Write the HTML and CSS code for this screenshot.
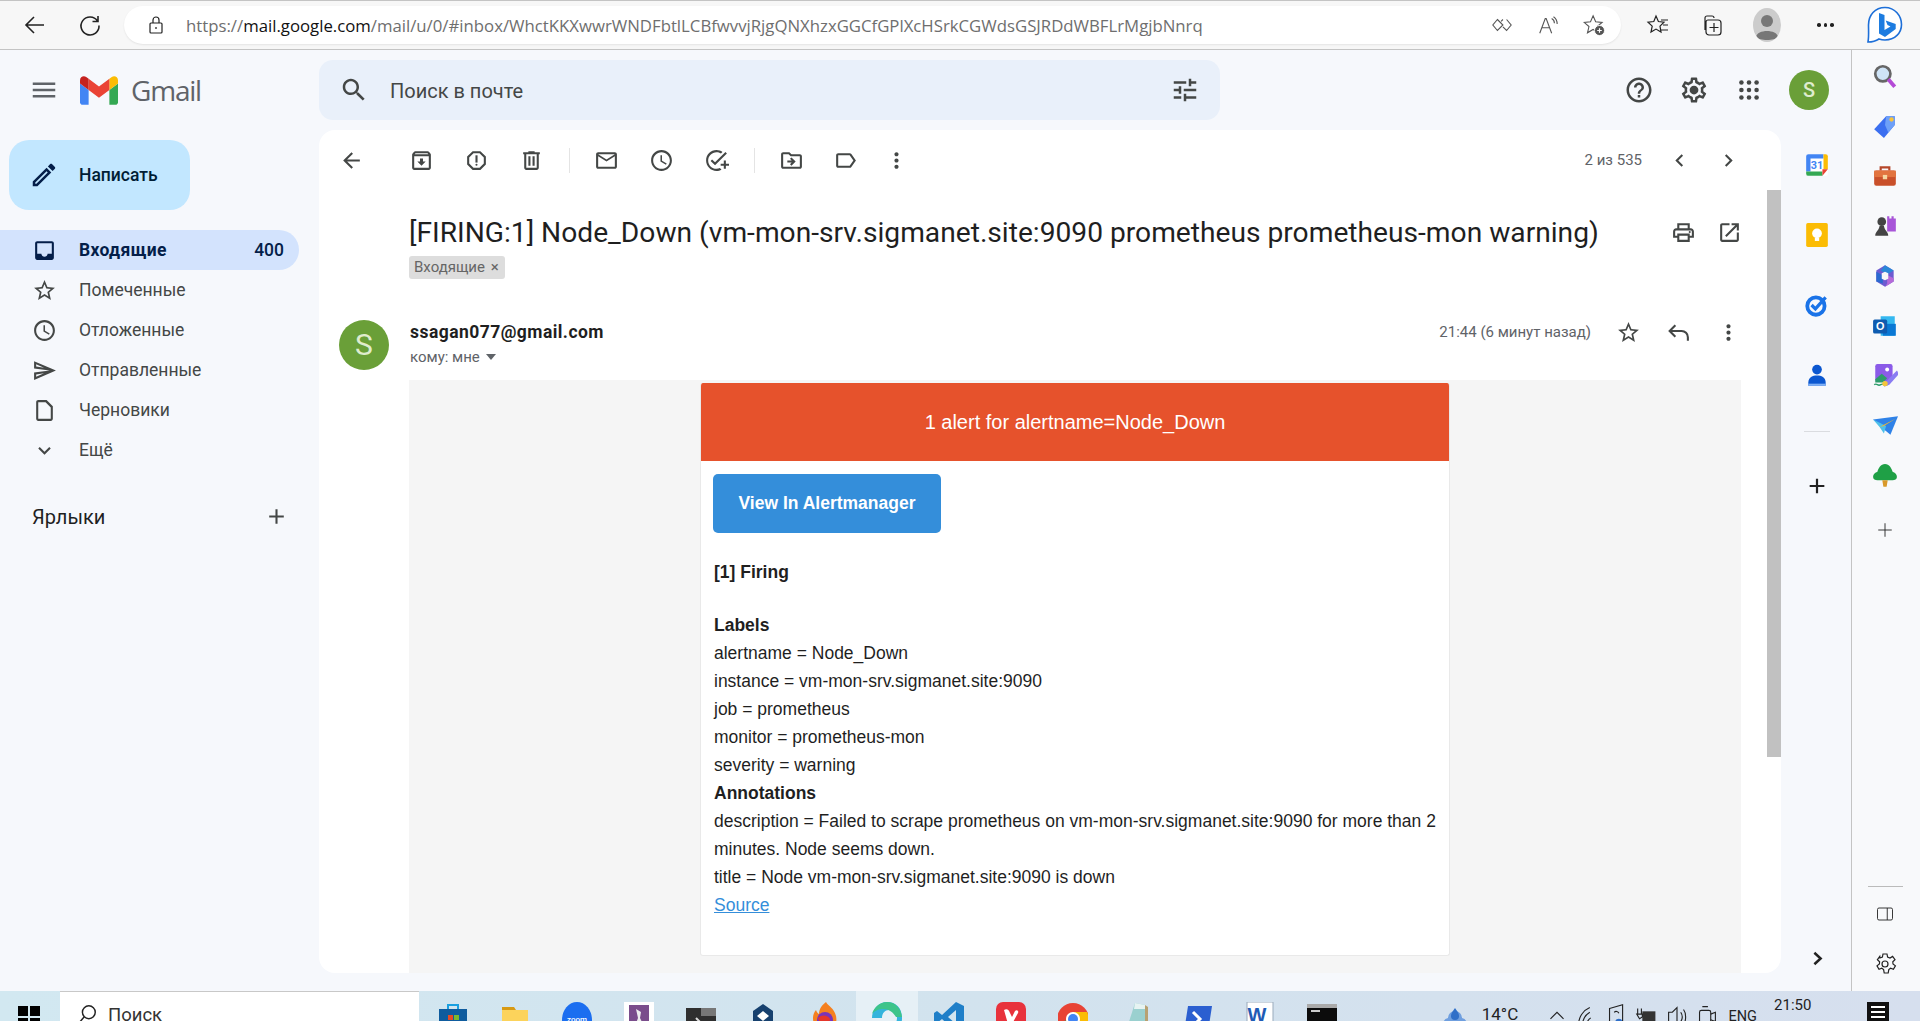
FILE: index.html
```html
<!DOCTYPE html>
<html lang="ru">
<head>
<meta charset="utf-8">
<title>Gmail</title>
<link rel="stylesheet" href="styles.css">
</head>
<body>
<div class="page">
  <header class="browser">
    <span class="bslot first"><svg class="ic-b" viewBox="0 0 24 24"><path d="M21 12H3M11 4l-8 8 8 8" class="ln"/></svg></span>
    <span class="bslot"><svg class="ic-b" viewBox="0 0 24 24"><path d="M19.500 8A9 9 0 1 0 21 12.500M20 3v5.500h-5.500" class="ln"/></svg></span>
    <div class="addr">
      <svg class="lock" viewBox="0 0 20 20"><path d="M5 8h10a1 1 0 0 1 1 1v8a1 1 0 0 1-1 1H5a1 1 0 0 1-1-1V9a1 1 0 0 1 1-1zM7 8V5a3 3 0 0 1 6 0v3" class="ln thin"/><circle cx="10" cy="13" r="1" fill="#444"/></svg>
      <span class="url">https://<b>mail.google.com</b>/mail/u/0/#inbox/WhctKKXwwrWNDFbtlLCBfwvvjRjgQNXhzxGGCfGPlXcHSrkCGWdsGSJRDdWBFLrMgjbNnrq</span>
      <span class="addr-end">
        <svg class="ic-a" viewBox="0 0 24 24"><path d="M7 6l6 6-6 6-5-6zM13 6l-2 2M17 6l5 6-5 6-4-4" class="ln gray thin"/></svg>
        <svg class="ic-a" viewBox="0 0 24 24"><path d="M3 21 9 5h1l6 16M5.500 15h8.500M16 5c2 1 3 3 3 5M18 3c3 2 4 5 4 8" class="ln gray thin"/></svg>
        <svg class="ic-a" viewBox="0 0 24 24"><path d="M11 2l2.800 6.500 7 .6-5.300 4.600 1.600 6.800-6.100-3.600-6.100 3.600 1.600-6.800L1.200 9.100l7-.6z" class="ln gray thin"/><circle cx="18" cy="18" r="5.500" fill="#555" stroke="#fff"/><path d="M18 15.500v5M15.500 18h5" stroke="#fff" stroke-width="1.300"/></svg>
      </span>
    </div>
    <span class="bright">
      <svg class="ic-b" viewBox="0 0 24 24"><path d="M10 3l2.400 5.500 5.600.6-4 4 1 6-5-3-5 3 1.200-6-4.200-4 5.800-.6zM15 7h7M17 12h5M15 17h7" class="ln thin"/></svg>
      <svg class="ic-b" viewBox="0 0 24 24"><path d="M5 17V5a2 2 0 0 1 2-2h5a2 2 0 0 1 2 2M9 22a3 3 0 0 1-3-3V9a2 2 0 0 1 2-2h10a3 3 0 0 1 3 3v9a3 3 0 0 1-3 3zM14 10v9M9.500 14.500h9" class="ln thin"/></svg>
      <span class="profile"><svg viewBox="0 0 28 34"><circle cx="14" cy="13" r="6" fill="#777"/><path d="M3 29c1-8 21-8 22 0-3 4-19 4-22 0z" fill="#777"/></svg></span>
      <span class="dots"><i></i><i></i><i></i></span>
    </span>
    <span class="bing">
      <svg viewBox="0 0 38 38" class="bing-ic"><path d="M19 1.500C9 1.500 2.500 9 2.500 19c0 6 .5 11-.5 17 4 0 8-1 11-3 2 .7 4 1 6 1 10 0 16.500-7 16.500-15.500S29 1.500 19 1.500z" fill="#fff" stroke="#1d6fd8" stroke-width="1.600"/><path d="M13 7l5.500 2v15l6-3.500-3-1.500-1.800-4.500 10 3.500v5L19 31l-6-3.500z" fill="#1d7ce0"/></svg>
    </span>
  </header>

  <div class="desktop">
    <div class="gmail">
      <aside class="side">
        <div class="brand">
          <svg class="ic menu-ic" viewBox="0 0 24 24"><path d="M3 18h18v-2H3v2zm0-5h18v-2H3v2zm0-7v2h18V6H3z"/></svg>
          <svg class="mlogo" viewBox="52 42 88 66"><path fill="#4285f4" d="M58 108h14V74L52 59v43c0 3.320 2.690 6 6 6"/><path fill="#34a853" d="M120 108h14c3.320 0 6-2.690 6-6V59l-20 15"/><path fill="#fbbc04" d="M120 48v26l20-15v-8c0-7.420-8.470-11.650-14.400-7.200"/><path fill="#ea4335" d="M72 74V48l24 18 24-18v26L96 92"/><path fill="#c5221f" d="M52 51v8l20 15V48l-5.600-4.200c-5.940-4.450-14.400-.22-14.400 7.200"/></svg>
          <span class="gm">Gmail</span>
        </div>
        <button class="compose">
          <svg class="ic pencil" viewBox="0 0 24 24"><path d="M3 17.250V21h3.750L17.810 9.940l-3.750-3.750L3 17.250zM5.920 19H5v-.92l9.060-9.060.92.92L5.920 19zM20.710 5.630l-2.340-2.340c-.39-.39-1.020-.39-1.410 0l-1.830 1.830 3.750 3.750 1.830-1.830c.39-.39.39-1.020 0-1.410z"/></svg>
          <span>Написать</span>
        </button>
        <nav class="nav">
          <a class="row active"><svg class="ic" viewBox="0 0 24 24"><path d="M19 3H5c-1.100 0-2 .9-2 2v14c0 1.100.9 2 2 2h14c1.100 0 2-.9 2-2V5c0-1.100-.9-2-2-2zm0 12h-4c0 1.660-1.350 3-3 3s-3-1.340-3-3H5V5h14v10z"/></svg><span>Входящие</span><em>400</em></a>
          <a class="row"><svg class="ic" viewBox="0 0 24 24"><path d="M22 9.240l-7.190-.62L12 2 9.190 8.630 2 9.240l5.460 4.730L5.820 21 12 17.270 18.180 21l-1.630-7.030L22 9.240zM12 15.400l-3.760 2.270 1-4.280-3.320-2.880 4.380-.38L12 6.100l1.710 4.040 4.380.38-3.320 2.880 1 4.280L12 15.400z"/></svg><span>Помеченные</span></a>
          <a class="row"><svg class="ic" viewBox="0 0 24 24"><path d="M11.990 2C6.470 2 2 6.480 2 12s4.470 10 9.990 10C17.520 22 22 17.520 22 12S17.520 2 11.990 2zM12 20c-4.420 0-8-3.580-8-8s3.580-8 8-8 8 3.580 8 8-3.580 8-8 8zM12.500 7H11v6l5.250 3.150.75-1.230-4.500-2.670z"/></svg><span>Отложенные</span></a>
          <a class="row"><svg class="ic" viewBox="0 0 24 24"><path d="M4.010 6.030l7.510 3.220-7.520-1 .01-2.220m7.500 8.720L4 17.970v-2.220l7.510-1M2.010 3L2 10l15 2-15 2 .01 7L23 12 2.010 3z"/></svg><span>Отправленные</span></a>
          <a class="row"><svg class="ic" viewBox="0 0 24 24"><path d="M14 2H6c-1.100 0-2 .9-2 2v16c0 1.100.9 2 2 2h12c1.100 0 2-.9 2-2V8l-6-6zm4 18H6V4h7l5 5v11z"/></svg><span>Черновики</span></a>
          <a class="row"><svg class="ic" viewBox="0 0 24 24"><path d="M16.590 8.590L12 13.170 7.410 8.590 6 10l6 6 6-6z"/></svg><span>Ещё</span></a>
        </nav>
        <div class="labels"><span>Ярлыки</span><svg class="ic" viewBox="0 0 24 24"><path d="M19 13h-6v6h-2v-6H5v-2h6V5h2v6h6v2z"/></svg></div>
      </aside>

      <div class="main">
        <div class="top">
          <div class="search">
            <svg class="ic s-ic" viewBox="0 0 24 24"><path d="M15.500 14h-.79l-.28-.27C15.410 12.590 16 11.110 16 9.500 16 5.910 13.090 3 9.500 3S3 5.910 3 9.500 5.910 16 9.500 16c1.610 0 3.090-.59 4.230-1.570l.27.28v.79l5 4.990L20.490 19l-4.990-5zm-6 0C7.010 14 5 11.990 5 9.500S7.010 5 9.500 5 14 7.010 14 9.500 11.990 14 9.500 14z"/></svg>
            <span class="ph">Поиск в почте</span>
            <svg class="ic tune" viewBox="0 0 24 24"><path d="M3 17v2h6v-2H3zM3 5v2h10V5H3zm10 16v-2h8v-2h-8v-2h-2v6h2zM7 9v2H3v2h4v2h2V9H7zm14 4v-2H11v2h10zm-6-4h2V7h4V5h-4V3h-2v6z"/></svg>
          </div>
          <div class="acts">
            <span class="slot"><svg class="ic huge" viewBox="0 0 24 24"><path d="M11 18h2v-2h-2v2zm1-16C6.480 2 2 6.480 2 12s4.480 10 10 10 10-4.480 10-10S17.520 2 12 2zm0 18c-4.410 0-8-3.590-8-8s3.590-8 8-8 8 3.590 8 8-3.590 8-8 8zm0-14c-2.210 0-4 1.790-4 4h2c0-1.100.9-2 2-2s2 .9 2 2c0 2-3 1.750-3 5h2c0-2.250 3-2.500 3-5 0-2.210-1.790-4-4-4z"/></svg></span>
            <span class="slot"><svg class="ic huge" viewBox="0 0 24 24"><path d="M19.430 12.980c.04-.32.07-.64.07-.98s-.03-.66-.07-.98l2.110-1.650c.19-.15.24-.42.12-.64l-2-3.460c-.12-.22-.39-.3-.61-.22l-2.490 1c-.52-.4-1.080-.73-1.690-.98l-.38-2.650C14.460 2.180 14.250 2 14 2h-4c-.25 0-.46.18-.49.42l-.38 2.650c-.61.25-1.170.59-1.690.98l-2.490-1c-.23-.09-.49 0-.61.22l-2 3.460c-.13.22-.07.49.12.64l2.110 1.650c-.04.32-.07.65-.07.98s.03.66.07.98l-2.110 1.650c-.19.15-.24.42-.12.64l2 3.460c.12.22.39.3.61.22l2.490-1c.52.4 1.080.73 1.690.98l.38 2.650c.03.24.24.42.49.42h4c.25 0 .46-.18.49-.42l.38-2.650c.61-.25 1.170-.59 1.690-.98l2.490 1c.23.09.49 0 .61-.22l2-3.460c.12-.22.07-.49-.12-.64l-2.110-1.650zm-1.980-1.710c.04.31.05.52.05.73s-.02.43-.05.73l-.14 1.130.89.7 1.080.84-.7 1.210-1.270-.51-1.040-.42-.9.68c-.43.32-.84.56-1.250.73l-1.060.43-.16 1.130-.2 1.350h-1.400l-.19-1.350-.16-1.130-1.060-.43c-.43-.18-.83-.41-1.230-.71l-.91-.7-1.060.43-1.270.51-.7-1.210 1.080-.84.89-.7-.14-1.130c-.03-.31-.05-.54-.05-.74s.02-.43.05-.73l.14-1.130-.89-.7-1.080-.84.7-1.210 1.270.51 1.040.42.9-.68c.43-.32.84-.56 1.250-.73l1.060-.43.16-1.130.2-1.350h1.390l.19 1.350.16 1.130 1.060.43c.43.18.83.41 1.230.71l.91.7 1.060-.43 1.270-.51.7 1.210-1.070.85-.89.7.14 1.130z"/><circle cx="12" cy="12" r="3.500"/></svg></span>
            <span class="slot"><svg class="ic big" viewBox="0 0 24 24"><g><circle cx="5" cy="5" r="2.100"/><circle cx="12" cy="5" r="2.100"/><circle cx="19" cy="5" r="2.100"/><circle cx="5" cy="12" r="2.100"/><circle cx="12" cy="12" r="2.100"/><circle cx="19" cy="12" r="2.100"/><circle cx="5" cy="19" r="2.100"/><circle cx="12" cy="19" r="2.100"/><circle cx="19" cy="19" r="2.100"/></g></svg></span>
            <span class="avatar">S</span>
          </div>
        </div>

        <div class="work">
          <section class="card">
            <div class="tools">
              <span class="t back"><svg class="ic" viewBox="0 0 24 24"><path d="M20 11H7.830l5.590-5.590L12 4l-8 8 8 8 1.410-1.410L7.830 13H20v-2z"/></svg></span>
              <span class="t g1"><svg class="ic" viewBox="0 0 24 24"><path d="M20.540 5.230l-1.390-1.680C18.880 3.210 18.470 3 18 3H6c-.47 0-.88.21-1.160.55L3.460 5.230C3.170 5.570 3 6.020 3 6.500V19c0 1.100.9 2 2 2h14c1.100 0 2-.9 2-2V6.500c0-.48-.17-.93-.46-1.270zM6.240 5h11.520l.81.97H5.440l.8-.97zM5 19V8h14v11H5zm8.450-9h-2.900v3H8l4 4 4-4h-2.550z"/></svg></span>
              <span class="t"><svg class="ic" viewBox="0 0 24 24"><path d="M15.730 3H8.270L3 8.270v7.460L8.270 21h7.460L21 15.730V8.270L15.730 3zM19 14.900L14.900 19H9.100L5 14.900V9.100L9.100 5h5.800L19 9.100v5.800z"/><circle cx="12" cy="16" r="1"/><rect x="11" y="7" width="2" height="7"/></svg></span>
              <span class="t"><svg class="ic" viewBox="0 0 24 24"><path d="M15 4V3H9v1H4v2h1v13c0 1.100.9 2 2 2h10c1.100 0 2-.9 2-2V6h1V4h-5zm2 15H7V6h10v13zM9 8h2v9H9zm4 0h2v9h-2z"/></svg></span>
              <i class="sep"></i>
              <span class="t"><svg class="ic" viewBox="0 0 24 24"><path d="M20 4H4c-1.100 0-2 .9-2 2v12c0 1.100.9 2 2 2h16c1.100 0 2-.9 2-2V6c0-1.100-.9-2-2-2zm0 14H4V8l8 5 8-5v10zm-8-7L4 6h16l-8 5z"/></svg></span>
              <span class="t"><svg class="ic" viewBox="0 0 24 24"><path d="M11.990 2C6.470 2 2 6.480 2 12s4.470 10 9.990 10C17.520 22 22 17.520 22 12S17.520 2 11.990 2zM12 20c-4.420 0-8-3.580-8-8s3.580-8 8-8 8 3.580 8 8-3.580 8-8 8zM12.500 7H11v6l5.250 3.150.75-1.230-4.500-2.670z"/></svg></span>
              <span class="t"><svg class="ic" viewBox="0 0 24 24"><path d="M22 5.180 10.590 16.600l-4.240-4.240 1.410-1.410 2.830 2.830 10-10L22 5.180zM12 20c-4.410 0-8-3.590-8-8s3.590-8 8-8c1.570 0 3.040.46 4.280 1.250l1.450-1.450C16.100 2.670 14.130 2 12 2 6.480 2 2 6.480 2 12s4.480 10 10 10c1.730 0 3.360-.44 4.780-1.220l-1.500-1.500c-1 .46-2.110.72-3.280.72zm7-5h-3v2h3v3h2v-3h3v-2h-3v-3h-2v3z"/></svg></span>
              <i class="sep"></i>
              <span class="t"><svg class="ic" viewBox="0 0 24 24"><path d="M20 6h-8l-2-2H4c-1.100 0-2 .9-2 2v12c0 1.100.9 2 2 2h16c1.100 0 2-.9 2-2V8c0-1.100-.9-2-2-2zm0 12H4V6h5.170l2 2H20v10zM12.160 12H8v2h4.160l-1.590 1.590L11.990 17 16 13l-4.010-4-1.420 1.410z"/></svg></span>
              <span class="t tag"><svg class="ic" viewBox="0 0 24 24"><path d="M17.630 5.840C17.270 5.330 16.670 5 16 5L5 5.010C3.900 5.010 3 5.900 3 7v10c0 1.100.9 1.990 2 1.990L16 19c.67 0 1.270-.33 1.630-.84L22 12l-4.370-6.160zM16 17H5V7h11l3.550 5L16 17z"/></svg></span>
              <span class="t narrow"><svg class="ic" viewBox="0 0 24 24"><path d="M12 8c1.100 0 2-.9 2-2s-.9-2-2-2-2 .9-2 2 .9 2 2 2zm0 2c-1.100 0-2 .9-2 2s.9 2 2 2 2-.9 2-2-.9-2-2-2zm0 6c-1.100 0-2 .9-2 2s.9 2 2 2 2-.9 2-2-.9-2-2-2z"/></svg></span>
              <span class="count">2 из 535</span>
              <span class="t pg"><svg class="ic" viewBox="0 0 24 24"><path d="M15.410 7.410L14 6l-6 6 6 6 1.410-1.410L10.830 12z"/></svg></span>
              <span class="t pg"><svg class="ic" viewBox="0 0 24 24"><path d="M10 6L8.590 7.410 13.170 12l-4.580 4.590L10 18l6-6z"/></svg></span>
            </div>
            <div class="scroller">
              <div class="thread">
                <div class="subject">
                  <div>
                    <h1>[FIRING:1] Node_Down (vm-mon-srv.sigmanet.site:9090 prometheus prometheus-mon warning)</h1>
                    <span class="chip">Входящие <span class="chip-x">×</span></span>
                  </div>
                  <span class="subj-acts">
                    <svg class="ic" viewBox="0 0 24 24"><path d="M19 8h-1V3H6v5H5c-1.660 0-3 1.340-3 3v6h4v4h12v-4h4v-6c0-1.660-1.340-3-3-3zM8 5h8v3H8V5zm8 14H8v-4h8v4zm2-4v-2H6v2H4v-4c0-.55.45-1 1-1h14c.55 0 1 .45 1 1v4h-2z"/><circle cx="18" cy="11.500" r="1"/></svg>
                    <svg class="ic" viewBox="0 0 24 24"><path d="M19 19H5V5h7V3H5c-1.110 0-2 .9-2 2v14c0 1.100.89 2 2 2h14c1.100 0 2-.9 2-2v-7h-2v7zM14 3v2h3.590l-9.830 9.830 1.410 1.410L19 6.410V10h2V3h-7z"/></svg>
                  </span>
                </div>
                <div class="from">
                  <span class="av2">S</span>
                  <div class="who">
                    <strong>ssagan077@gmail.com</strong>
                    <span class="to">кому: мне <i class="caret"></i></span>
                  </div>
                  <span class="when">21:44 (6 минут назад)</span>
                  <span class="from-acts">
                    <svg class="ic" viewBox="0 0 24 24"><path d="M22 9.240l-7.190-.62L12 2 9.190 8.630 2 9.240l5.460 4.730L5.820 21 12 17.270 18.180 21l-1.630-7.030L22 9.240zM12 15.400l-3.760 2.270 1-4.280-3.320-2.880 4.380-.38L12 6.100l1.710 4.040 4.380.38-3.320 2.880 1 4.280L12 15.400z"/></svg>
                    <svg class="ic" viewBox="0 0 24 24"><path d="M9 5 3.500 10.500 9 16M3.500 10.500H15a6 6 0 0 1 6 6V20" class="ln gm-ln"/></svg>
                    <svg class="ic" viewBox="0 0 24 24"><path d="M12 8c1.100 0 2-.9 2-2s-.9-2-2-2-2 .9-2 2 .9 2 2 2zm0 2c-1.100 0-2 .9-2 2s.9 2 2 2 2-.9 2-2-.9-2-2-2zm0 6c-1.100 0-2 .9-2 2s.9 2 2 2 2-.9 2-2-.9-2-2-2z"/></svg>
                  </span>
                </div>
                <div class="mailbody">
                  <div class="alert">
                    <div class="alert-h">1 alert for alertname=Node_Down</div>
                    <div class="alert-b">
                      <a class="btn">View In Alertmanager</a>
                      <p class="firing"><b>[1] Firing</b></p>
                      <p><b>Labels</b></p>
                      <p>alertname = Node_Down</p>
                      <p>instance = vm-mon-srv.sigmanet.site:9090</p>
                      <p>job = prometheus</p>
                      <p>monitor = prometheus-mon</p>
                      <p>severity = warning</p>
                      <p><b>Annotations</b></p>
                      <p>description = Failed to scrape prometheus on vm-mon-srv.sigmanet.site:9090 for more than 2 minutes. Node seems down.</p>
                      <p>title = Node vm-mon-srv.sigmanet.site:9090 is down</p>
                      <p><a class="src">Source</a></p>
                    </div>
                  </div>
                </div>
              </div>
              <div class="track"><div class="thumb"></div></div>
            </div>
          </section>
          <aside class="rail">
            <span class="r"><svg class="app" viewBox="0 0 24 24"><rect x="2" y="2" width="20" height="20" rx="2" fill="#fff"/><path d="M2 4a2 2 0 0 1 2-2h14v4H6v12H2z" fill="#4285f4"/><path d="M18 2h2a2 2 0 0 1 2 2v12h-4z" fill="#fbbc04"/><path d="M6 18h11v4H4a2 2 0 0 1-2-2v-2z" fill="#34a853"/><path d="M17 16h5l-5 6z" fill="#ea4335"/><text x="12" y="16" class="cal">31</text></svg></span>
            <span class="r"><svg class="app" viewBox="0 0 24 24"><rect x="2" y="1" width="20" height="22" rx="1.500" fill="#fbbc04"/><circle cx="12" cy="10.500" r="4.500" fill="#fff"/><rect x="10" y="14.500" width="4" height="3" fill="#fff"/></svg></span>
            <span class="r"><svg class="app" viewBox="0 0 24 24"><circle cx="11" cy="13" r="8" fill="none" stroke="#1a73e8" stroke-width="3.500"/><path d="M7 12l3.500 3.500L20 5" fill="none" stroke="#1a73e8" stroke-width="3"/></svg></span>
            <span class="r"><svg class="app" viewBox="0 0 24 24"><circle cx="12" cy="7" r="4.500" fill="#0b57d0"/><path d="M4 22v-3c0-5 4-6.500 8-6.500s8 1.500 8 6.500v3z" fill="#0b57d0"/><path d="M4 20h16v2H4z" fill="#7fb0f5"/></svg></span>
            <i class="rail-sep"></i>
            <span class="r plus-r"><svg class="rail-plus" viewBox="0 0 24 24"><path d="M12 4v16M4 12h16" class="ln strong"/></svg></span>
            <span class="r chev-r"><svg class="ic dark" viewBox="0 0 24 24"><path d="M9 6.500 15 12l-6 5.500" class="ln strong"/></svg></span>
          </aside>
        </div>
      </div>
    </div>

    <aside class="edge">
      <span class="e"><svg class="app" viewBox="0 0 24 24"><circle cx="10" cy="10" r="7" fill="#cfe4f7" stroke="#666" stroke-width="2.500"/><path d="M15 15l6 7" stroke="#b44ad6" stroke-width="3.500"/></svg></span>
      <span class="e"><svg class="app" viewBox="0 0 24 24"><path d="M13 3h8v8L11 23l-9-8z" fill="#3b6ff0"/><path d="M13 3h8v8l-6 7-3-7z" fill="#6ea0f8"/><circle cx="18" cy="6" r="2" fill="#f8c33a"/></svg></span>
      <span class="e"><svg class="app" viewBox="0 0 24 24"><path d="M8 7V4h8v3" fill="none" stroke="#b5472a" stroke-width="2"/><rect x="2" y="7" width="20" height="14" rx="2" fill="#c9502a"/><rect x="2" y="7" width="20" height="6" fill="#e2743f"/><rect x="10" y="11" width="4" height="4" fill="#f5d6a0"/></svg></span>
      <span class="e"><svg class="app" viewBox="0 0 24 24"><circle cx="9" cy="8" r="4" fill="#444"/><path d="M3 21c0-4 3-4 4-9h4c1 5 4 5 4 9z" fill="#444"/><path d="M14 3h2v2h2V3h2v2h2V3v14h-8z" fill="#a855d8"/></svg></span>
      <span class="e"><svg class="app" viewBox="0 0 24 24"><path d="M12 2l8 5v10l-8 5-8-5V7z" fill="#6d5bd0"/><path d="M12 2l8 5-6 3.500-6-3.500z" fill="#2b88d8"/><path d="M4 8l6 3.500V19l-6-2z" fill="#2a6ad0"/><path d="M14 11l6 3v3l-8 5 2-3z" fill="#b56ad8"/><path d="M9 9.500 12 8l3 1.500v5L12 16l-3-1.500z" fill="#f7f7f7"/></svg></span>
      <span class="e"><svg class="app" viewBox="0 0 24 24"><path d="M8 3h13v18H8z" fill="#35b8f0"/><path d="M10 10l12 0v11H10z" fill="#0a78d4"/><rect x="1" y="6" width="13" height="13" rx="1.500" fill="#0f5cb0"/><text x="7.500" y="16" class="olk">O</text></svg></span>
      <span class="e"><svg class="app" viewBox="0 0 24 24"><rect x="3" y="1" width="16" height="16" rx="2" fill="#8b5be8"/><circle cx="14" cy="6" r="1.800" fill="#fff"/><path d="M3 15l6-5 5 4-4 4H3z" fill="#2d9c6a"/><path d="M2 20c3-2 3 2 6 0s3 2 6 0" fill="none" stroke="#2d9c6a" stroke-width="1.300"/><path d="M23 7 13 17l-2 5 5-2L25 10z" fill="#8a7cf2"/><circle cx="12" cy="19" r="2.500" fill="#f4c53a"/></svg></span>
      <span class="e"><svg class="app" viewBox="0 0 24 24"><path d="M1 6l23-3-7 17-5-4z" fill="#2f82e8"/><path d="M1 6l12 6-2 7-4-6z" fill="#4fc1ea"/><path d="M7 13l15-8-11 7z" fill="#f2b632"/></svg></span>
      <span class="e"><svg class="app" viewBox="0 0 24 24"><path d="M12 1c4 0 6 4 7 7 3 1 4 3 4 5 0 2-2 3-4 3H5c-2 0-4-1-4-3 0-2 1-4 4-5 1-3 3-7 7-7z" fill="#1fa046"/><path d="M9.500 16h5l-1 6h-3z" fill="#d99a2b"/></svg></span>
      <span class="e e-add"><svg class="e-plus" viewBox="0 0 24 24"><path d="M12 3v18M3 12h18" class="ln thin"/></svg></span>
      <div class="edge-end">
        <i class="edge-sep"></i>
        <span class="e"><svg class="e-plus" viewBox="0 0 24 24"><path d="M4 4h16a2 2 0 0 1 2 2v12a2 2 0 0 1-2 2H4a2 2 0 0 1-2-2V6a2 2 0 0 1 2-2zM15 4v16" class="ln thin"/></svg></span>
        <span class="e"><svg class="e-gear" viewBox="0 0 24 24"><path d="M10 2h4l.6 3 2.400 1 2.600-1.600 2.400 3.200-2.200 2.200.2 2.200 2.400 1.800-2 3.400-2.800-1-1.800 1.400-.6 3.400h-4l-.6-3.400-1.800-1.400-2.800 1-2-3.400 2.400-1.800.2-2.200-2.200-2.200 2.400-3.200L7 6l2.400-1z" class="ln thin"/><circle cx="12" cy="12" r="3" class="ln thin"/></svg></span>
      </div>
    </aside>
  </div>

  <footer class="taskbar">
    <span class="start"><i></i><i></i><i></i><i></i></span>
    <div class="ts"><svg class="ts-ic" viewBox="0 0 24 24"><circle cx="14" cy="9" r="7" class="ln"/><path d="M9 14l-6 7" class="ln"/></svg><span>Поиск</span></div>
    <div class="apps">
      <span class="tb"><svg viewBox="0 0 30 30"><path d="M10 8V3h10v5" fill="none" stroke="#1aa0e0" stroke-width="2"/><rect x="1" y="7" width="28" height="23" fill="#0f5c9e"/><rect x="10" y="13" width="5" height="5" fill="#e74c25"/><rect x="16" y="13" width="5" height="5" fill="#7cb82f"/><rect x="10" y="19" width="5" height="5" fill="#1aa0e0"/><rect x="16" y="19" width="5" height="5" fill="#f5b90f"/></svg></span>
      <span class="tb"><svg viewBox="0 0 30 30"><path d="M2 5h12l2 3v6H2z" fill="#d89a13"/><rect x="2" y="8" width="26" height="22" fill="#fcd35b"/><rect x="9" y="20" width="13" height="10" fill="#4aa0dc"/></svg></span>
      <span class="tb"><svg viewBox="0 0 30 30"><ellipse cx="15" cy="18" rx="15" ry="18" fill="#1b6ef0"/><text x="15" y="20" class="zoom">zoom</text></svg></span>
      <span class="tb"><svg viewBox="0 0 30 30"><rect width="30" height="30" fill="#fff"/><rect x="5" y="3" width="20" height="27" fill="#7a4d8c"/><path d="M12 7l5 3-1 6 4 8h-9l3-8z" fill="#eee"/></svg></span>
      <span class="tb"><svg viewBox="0 0 30 30"><rect y="6" width="30" height="24" fill="#2f2f2f"/><rect x="15" y="6" width="15" height="8" fill="#777"/><path d="M10 16l5 5-5 5" fill="none" stroke="#ddd" stroke-width="2"/></svg></span>
      <span class="tb"><svg viewBox="0 0 30 30"><path d="M15 2l10 7v14l-10 7-10-7V9z" fill="#16406e"/><path d="M15 9l6 5-6 5-6-5z" fill="#fff"/><path d="M15 19v11" stroke="#fff" stroke-width="2"/></svg></span>
      <span class="tb"><svg viewBox="0 0 30 30"><path d="M16 0c2 4 8 6 10 14 2 9-4 16-11 16S3 24 3 16c0-3 1-6 3-8 1 3 2 3 3 4 0-5 3-9 7-12z" fill="#f5801f"/><circle cx="15" cy="18" r="8" fill="#7a34b8"/><path d="M8 16c4-4 10-3 12 1 0 5-6 8-10 5z" fill="#e5362a"/></svg></span>
      <span class="tb on"><svg viewBox="0 0 30 30"><path d="M15 0C6 0 0 8 0 16h10c0-5 3-8 7-8s8 3 8 8c0 3-1 5-3 6v8h2c4-3 6-8 6-14C30 6 24 0 15 0z" fill="#34b4dc"/><path d="M15 0c-7 0-13 5-15 12 3-4 8-5 11-5 6 0 10 3 13 8h6C29 6 23 0 15 0z" fill="#3dc48a"/><circle cx="15" cy="26" r="5" fill="#888"/></svg></span>
      <span class="tb"><svg viewBox="0 0 30 30"><path d="M22 0l8 4v22l-8 4L8 17l-5 4-3-2V11l3-2 5 4z" fill="#1f7fc8"/><path d="M22 8 14 15l8 7z" fill="#d3e5ef"/></svg></span>
      <span class="tb"><svg viewBox="0 0 30 30"><rect width="30" height="30" rx="7" fill="#e8323c"/><path d="M8 8c3-2 5 0 6 3l2 4 3-6c2-2 4 0 3 2l-6 11c-1 2-3 2-4 0z" fill="#fff"/></svg></span>
      <span class="tb"><svg viewBox="0 0 30 30"><circle cx="15" cy="17" r="16" fill="#e84335"/><path d="M1 20a14 14 0 0 0 14 13h16V17H15z" fill="#34a853"/><path d="M15 10h14a16 16 0 0 1 2 7v16H15z" fill="#fbbc04"/><circle cx="15" cy="17" r="7" fill="#fff"/><circle cx="15" cy="17" r="5" fill="#4285f4"/></svg></span>
      <span class="tb"><svg viewBox="0 0 30 30"><path d="M6 26 14 1l10 2v27H6z" fill="#9ad0cf"/><path d="M24 3l3 2v25h-3z" fill="#b8a171"/><path d="M14 1l10 2v4H13z" fill="#e6f3f2"/></svg></span>
      <span class="tb"><svg viewBox="0 0 30 30"><path d="M5 4h24l-4 26H1z" fill="#2b5fd0"/><path d="M10 10l7 7-7 7" fill="none" stroke="#fff" stroke-width="3"/></svg></span>
      <span class="tb"><svg viewBox="0 0 30 30"><rect x="2" y="0" width="26" height="30" fill="#fff" stroke="#9ab" stroke-width="1"/><text x="12" y="20" class="word">W</text></svg></span>
      <span class="tb"><svg viewBox="0 0 30 30"><rect y="2" width="30" height="8" fill="#aaa"/><rect y="6" width="30" height="24" fill="#0c0c0c"/><path d="M4 9h9" stroke="#ccc" stroke-width="2"/></svg></span>
    </div>
    <div class="tray">
      <svg class="tw" viewBox="0 0 30 30"><path d="M8 16a7 7 0 0 1 14 0 6 6 0 0 1 2 11H6a6 6 0 0 1 2-11z" fill="#6f9fdf"/><path d="M15 6c3 4 4 6 4 8a4 4 0 0 1-8 0c0-2 1-4 4-8z" fill="#2f6fc8"/></svg>
      <span class="temp">14°C</span>
      <svg class="ty up" viewBox="0 0 30 30"><path d="M8 18l7-7 7 7" class="ln thin"/></svg>
      <svg class="ty" viewBox="0 0 30 30"><path d="M10 26c0-6 3-12 8-15M14 28c0-5 2-9 5-11M6 24c0-8 5-15 12-18" class="ln thin"/></svg>
      <svg class="ty" viewBox="0 0 30 30"><path d="M7 7l14-4v24H7z" class="ln thin"/><circle cx="17" cy="22" r="4" fill="#2f6fc8"/><path d="M12 11a3 3 0 0 1 5 1" class="ln thin"/></svg>
      <svg class="ty" viewBox="0 0 30 30"><rect x="10" y="10" width="14" height="13" fill="#333"/><path d="M5 7v6M9 7v6M4 13h6v3l-3 2z" class="ln thin"/></svg>
      <svg class="ty" viewBox="0 0 30 30"><path d="M6 11h4l5-5v20l-5-5H6zM19 11c2 3 2 7 0 10M22 8c3 4 3 12 0 16" class="ln thin"/></svg>
      <svg class="ty" viewBox="0 0 30 30"><rect x="7" y="9" width="12" height="16" rx="2" class="ln thin"/><path d="M19 13l5-2v10l-5-2M10 5h6" class="ln thin"/></svg>
      <span class="eng">ENG</span>
      <span class="clock">21:50</span>
      <span class="notif"><i></i><i></i><i></i></span>
    </div>
  </footer>
</div>
</body>
</html>
```

FILE: styles.css
```css
* { box-sizing: border-box; }
html, body { margin: 0; height: 100%; overflow: hidden; }
body { font-family: Roboto, "Noto Sans", sans-serif; color: #202124; background: #f6f8fc; }
.page { width: 1920px; height: 1021px; display: flex; flex-direction: column; overflow: hidden; }
svg { display: block; flex: none; }
.ic { width: 25px; height: 25px; fill: #444746; }
.ln { fill: none; stroke: #222; stroke-width: 1.6; }
.ln.thin { stroke-width: 1.2; }
.ln.gray { stroke: #555; }
.ln.strong { stroke-width: 2.4; }
.ln.gm-ln { stroke: #444746; stroke-width: 2; }

/* browser chrome */
.browser { height: 50px; flex: none; display: flex; align-items: center; background: #f7f7f7; border-top: 1px solid #c4c4c4; border-bottom: 1px solid #c4c4c4; }
.bslot { width: 55px; display: flex; justify-content: center; }
.bslot.first { margin-left: 7px; }
.ic-b { width: 24px; height: 24px; }
.addr { width: 1497px; margin-left: 7px; height: 38px; background: #fff; border-radius: 19px; display: flex; align-items: center; padding-left: 22px; box-shadow: 0 1px 2px rgba(0,0,0,.08); flex: none; }
.lock { width: 20px; height: 20px; }
.url { margin-left: 20px; font: 400 16.75px "Open Sans", sans-serif; color: #6e6e6e; white-space: nowrap; }
.url b { font-weight: 400; color: #111; }
.addr-end { margin-left: auto; display: flex; gap: 24px; padding-right: 16px; }
.ic-a { width: 22px; height: 22px; }
.bright { display: flex; align-items: center; margin-left: 25px; flex: none; }
.bright .ic-b + .ic-b { margin-left: 30px; }
.profile { width: 28px; height: 34px; margin-left: 29px; border-radius: 50%; background: #ccc; overflow: hidden; }
.profile svg { width: 28px; height: 34px; }
.dots { display: flex; gap: 3px; margin-left: 36px; }
.dots i { width: 3.5px; height: 3.5px; border-radius: 50%; background: #222; }
.bing { margin-left: 32px; flex: none; }
.bing-ic { width: 38px; height: 38px; }

.desktop { flex: 1; min-height: 0; display: flex; }
.gmail { flex: 1; display: flex; min-width: 0; background: #f6f8fc; }

/* left column */
.side { width: 319px; flex: none; }
.brand { height: 80px; display: flex; align-items: center; padding-left: 29px; }
.menu-ic { width: 30px; height: 30px; margin-right: 21px; fill: #5f6368; }
.mlogo { width: 38px; height: 29px; }
.gm { margin-left: 13px; font: 400 28px "Open Sans", sans-serif; color: #5f6368; letter-spacing: -1.2px; }
.compose { margin: 10px 0 0 9px; width: 181px; height: 70px; border: 0; border-radius: 20px; background: #c2e7ff; display: flex; align-items: center; padding: 0 0 0 20px; font: 500 17.5px Roboto, sans-serif; color: #001d35; gap: 20px; }
.pencil { fill: #041e49; width: 30px; height: 30px; }
.nav { margin-top: 20px; }
.row { height: 40px; width: 299px; display: flex; align-items: center; padding-left: 32px; border-radius: 0 20px 20px 0; font-size: 17.5px; color: #444746; gap: 22px; }
.row.active { background: #d3e3fd; color: #041e49; font-weight: 700; letter-spacing: .35px; }
.row.active .ic { fill: #041e49; }
.row em { margin-left: auto; padding-right: 15px; font-style: normal; font-weight: 500; font-size: 17.5px; letter-spacing: 0; }
.labels { margin-top: 34px; width: 299px; display: flex; justify-content: space-between; align-items: center; padding: 0 10px 0 32px; font-size: 20px; color: #1f1f1f; }

/* top */
.main { flex: 1; min-width: 0; display: flex; flex-direction: column; }
.top { height: 80px; flex: none; display: flex; align-items: center; }
.search { width: 901px; height: 60px; background: #e9f0fa; border-radius: 14px; display: flex; align-items: center; padding: 0 20px; }
.s-ic { width: 30px; height: 30px; }
.tune { margin-left: auto; width: 30px; height: 30px; }
.ph { margin-left: 21px; padding-top: 2px; font-size: 20px; color: #444746; }
.acts { margin-left: auto; display: flex; align-items: center; padding-right: 22px; }
.slot { width: 55px; display: flex; justify-content: center; }
.big { width: 26px; height: 26px; }
.huge { width: 30px; height: 30px; }
.avatar { width: 40px; height: 40px; margin-left: 13px; border-radius: 50%; background: #6a9f38; color: #dfeccd; font: 500 20px/40px Roboto, sans-serif; text-align: center; }

.work { flex: 1; min-height: 0; display: flex; }
.card { width: 1462px; height: 843px; background: #fff; border-radius: 16px; display: flex; flex-direction: column; overflow: hidden; }
.tools { height: 60px; flex: none; display: flex; align-items: center; padding: 0 28px 0 5px; }
.t { width: 55px; display: flex; justify-content: center; flex: none; }
.t.back { margin-right: 15px; }
.t.tag { margin-left: -1px; }
.t.narrow { width: 45px; margin-left: 1px; }
.t.pg { width: 49px; }
.sep { width: 1px; height: 25px; margin: 0 9px 0 10px; background: #e4e4e4; flex: none; }
.count { margin-left: auto; margin-right: 13px; font-size: 15px; color: #5f6368; }
.scroller { flex: 1; min-height: 0; display: flex; }
.thread { flex: 1; min-width: 0; display: flex; flex-direction: column; padding-left: 90px; padding-right: 26px; }
.track { width: 14px; flex: none; }
.thumb { height: 567px; background: #c1c1c1; }

.subject { height: 104px; flex: none; display: flex; justify-content: space-between; padding: 25px 0 0 0; }
.subject h1 { margin: 0; font-size: 28.18px; line-height: 36px; font-weight: 400; color: #1f1f1f; white-space: nowrap; }
.chip { display: inline-block; margin-top: 5px; height: 23px; padding: 0 6px 0 5px; background: #ddd; border-radius: 3px; font-size: 15px; line-height: 23px; color: #666; }
.chip-x { margin-left: 2px; }
.subj-acts { display: flex; gap: 21px; padding: 5px 0 0; margin-right: -1px; }
.from { height: 86px; flex: none; display: flex; margin-left: -70px; padding-top: 26px; }
.av2 { width: 50px; height: 50px; border-radius: 50%; background: #6a9f38; color: #dfeccd; font: 400 30px/50px Roboto, sans-serif; text-align: center; margin-right: 21px; flex: none; }
.who { display: flex; flex-direction: column; }
.who strong { margin-top: 1px; font-size: 17.5px; line-height: 22px; font-weight: 700; letter-spacing: .45px; color: #1f1f1f; }
.to { margin-top: 4px; font-size: 15px; line-height: 20px; color: #5f6368; display: flex; align-items: center; gap: 5px; }
.caret { margin-left: 1px; border: 5px solid transparent; border-top: 6px solid #5f6368; border-bottom: 0; }
.when { margin-left: auto; font-size: 15px; line-height: 22px; color: #5f6368; margin-top: 1px; }
.from-acts { display: flex; gap: 25px; margin-left: 25px; }

.mailbody { flex: 1; min-height: 0; background: #f5f5f5; padding-top: 3px; display: flex; justify-content: center; align-items: flex-start; }
.alert { width: 750px; background: #fff; border: 1px solid #e9e9e9; border-top: 0; border-radius: 3px; font: 400 17.5px/28px "Liberation Sans", Arial, sans-serif; color: #1f1f1f; overflow: hidden; height: 573px; }
.alert-h { height: 78px; background: #e6522c; color: #fff; font-size: 20px; line-height: 78px; text-align: center; }
.alert-b { padding: 13px 11px 0 12px; }
.btn { display: block; width: 228px; height: 59px; border-radius: 5px; background: #348eda; color: #fff; font-weight: 700; line-height: 59px; text-align: center; }
.alert-b p { margin: 0 0 0 1px; }
.alert-b .firing { margin: 25px 0 25px 1px; }
.src { color: #348eda; text-decoration: underline; }

/* right rail */
.rail { width: 70px; flex: none; display: flex; flex-direction: column; align-items: center; padding: 0 0 13px 2px; }
.r { height: 70px; display: flex; align-items: center; justify-content: center; flex: none; }
.app { width: 26px; height: 26px; }
.cal { font: 700 10px Roboto, sans-serif; fill: #4285f4; text-anchor: middle; }
.rail-sep { width: 26px; height: 1px; margin-top: 21px; background: #dadce0; flex: none; }
.plus-r { height: 50px; margin-top: 29px; }
.rail-plus { width: 22px; height: 22px; }
.chev-r { height: 40px; margin-top: auto; }
.dark { fill: none; }

/* edge sidebar */
.edge { width: 69px; flex: none; background: #f8f9fb; border-left: 1px solid #c4c4c4; display: flex; flex-direction: column; align-items: center; padding: 1px 2px 2px 0; }
.e { height: 50px; display: flex; align-items: center; justify-content: center; flex: none; }
.e-add { margin-top: 4px; }
.e-plus { width: 18px; height: 18px; }
.e-gear { width: 24px; height: 24px; }
.edge-end { margin-top: auto; display: flex; flex-direction: column; align-items: center; }
.edge-sep { width: 35px; height: 1px; background: #bbb; margin-bottom: 2px; }

/* taskbar */
.taskbar { height: 30px; flex: none; display: flex; overflow: hidden; background: linear-gradient(90deg, #d2e8f1, #d2e3ee 50%, #d6dfee); }
.start { width: 60px; padding: 15px 0 0 18px; display: grid; grid-template-columns: 10px 10px; grid-auto-rows: 10px; gap: 2px; flex: none; }
.start i { background: #000; }
.ts { width: 359px; height: 60px; flex: none; background: #fff; border-top: 1px solid #c8c8c8; display: flex; align-items: flex-start; padding: 12px 0 0 16px; gap: 10px; font-size: 18.5px; color: #333; }
.ts-ic { width: 22px; height: 22px; }
.ts span { line-height: 22px; }
.apps { display: flex; flex: none; margin-left: 3px; }
.tb { width: 62.05px; height: 60px; display: flex; justify-content: center; padding-top: 11px; flex: none; }
.tb svg { width: 30px; height: 30px; }
.tb.on { background: rgba(255,255,255,.45); }
.word { font: 700 20px "Liberation Sans", sans-serif; fill: #1f5bb5; text-anchor: middle; }
.olk { font: 700 10px "Liberation Sans", sans-serif; fill: #fff; text-anchor: middle; }
.zoom { font: 500 8px Roboto, sans-serif; fill: #fff; text-anchor: middle; }
.tray { flex: 1; display: flex; align-items: flex-start; padding: 11px 0 0 87px; min-width: 0; color: #222; }
.tw { width: 30px; height: 30px; }
.temp { margin-left: 12px; width: 44px; font-size: 17px; line-height: 24px; }
.ty { width: 28px; height: 28px; margin-left: 2px; }
.up { margin-left: 17px; }
.eng { margin-left: 2px; width: 40px; padding-top: 4px; font-size: 14.5px; line-height: 22px; text-align: center; }
.clock { margin: -7px 0 0 8px; width: 44px; font-size: 15px; line-height: 20px; text-align: center; }
.notif { margin-left: 52px; width: 22px; display: flex; flex-direction: column; gap: 3px; height: 40px; padding: 4px; background: #111; }
.notif i { height: 2px; background: #fff; flex: none; }
```
